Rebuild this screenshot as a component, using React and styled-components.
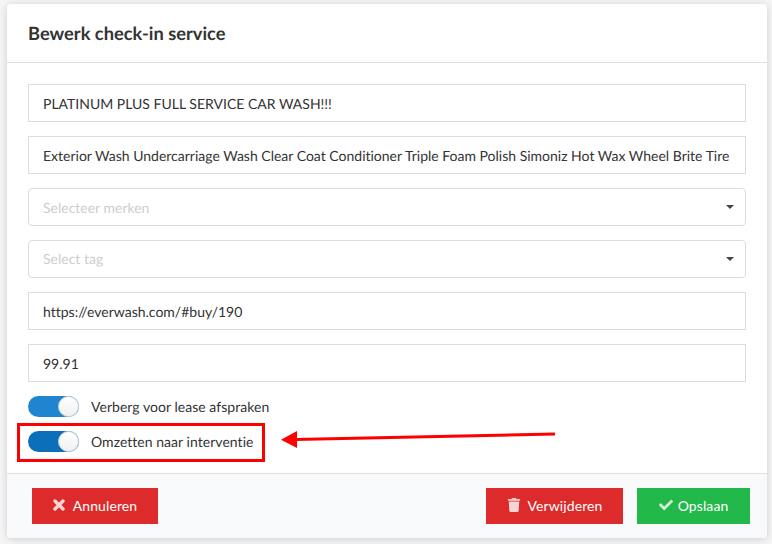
import React from "react";
import styled, { createGlobalStyle } from "styled-components";
import { FaTrash, FaCheck } from "react-icons/fa";

const Global = createGlobalStyle`
  html, body { margin: 0; padding: 0; background: #f6f6f6; }
  body {
    font-family: Lato, "Open Sans", sans-serif;
    font-variant-ligatures: none;
    text-rendering: geometricPrecision;
    width: 772px;
    height: 544px;
    overflow: hidden;
  }
`;

const Page = styled.div`
  position: relative;
  width: 772px;
  height: 544px;
  padding: 4px 5px 6px 7px;
  box-sizing: border-box;
`;

const Modal = styled.div`
  display: flex;
  flex-direction: column;
  height: 534px;
  background: #fff;
  border-radius: 4px;
  box-shadow: 0 1px 9px rgba(0, 0, 0, 0.17);
  overflow: hidden;
`;

const Header = styled.header`
  height: 59px;
  box-sizing: border-box;
  border-bottom: 1px solid #e0e0e0;
  padding: 0 21px;
  display: flex;
  align-items: center;
`;

const Title = styled.h2`
  margin: 0;
  font-size: 18.3px;
  font-weight: 700;
  color: #333;
`;

const Body = styled.div`
  flex: 1;
  padding: 21px 21px 0;
  display: flex;
  flex-direction: column;
  gap: 14px;
`;

const Field = styled.div`
  height: 38px;
  box-sizing: border-box;
  border: 1px solid #dcdcdc;
  border-radius: ${(p) => (p.$select ? "4px" : "0")};
  padding: 0 14px ${(p) => (p.$raised ? "2px" : "0")};
  display: flex;
  align-items: center;
  justify-content: space-between;
  font-size: 14px;
  color: ${(p) => (p.$placeholder ? "#cdcdcd" : "#333")};
  white-space: nowrap;
`;

const Caret = styled.span`
  width: 0;
  height: 0;
  border-left: 4px solid transparent;
  border-right: 4px solid transparent;
  border-top: 4px solid #444;
  margin-right: -3px;
  position: relative;
  top: ${(p) => (p.$raised ? "1px" : "0")};
`;

const Toggles = styled.div`
  display: flex;
  flex-direction: column;
  gap: 14px;
`;

const ToggleRow = styled.div`
  display: flex;
  align-items: center;
  gap: 12px;
  height: 21px;
  font-size: 14px;
  letter-spacing: 0.04px;
  color: #333;
`;

const Switch = styled.span`
  position: relative;
  width: 51px;
  height: 21px;
  border-radius: 11px;
  background: ${(p) => p.$color};
`;

const Knob = styled.span`
  position: absolute;
  right: 0;
  top: 0;
  width: 21px;
  height: 21px;
  box-sizing: border-box;
  border-radius: 50%;
  background: linear-gradient(#fff, #f0f0f0);
  border: 1px solid #d8d8d8;
`;

const Footer = styled.footer`
  height: 65px;
  box-sizing: border-box;
  border-top: 1px solid #dfdfe2;
  background: #f8f9fb;
  padding: 14px 17px 14px 25px;
  display: flex;
  align-items: flex-start;
  gap: 14px;
`;

const Button = styled.button`
  height: 36px;
  width: ${(p) => p.$width}px;
  margin-left: ${(p) => (p.$push ? "auto" : "0")};
  border: 0;
  padding: 0 0 2px;
  background: ${(p) => p.$bg};
  color: #fff;
  font-family: inherit;
  font-size: 14px;
  letter-spacing: 0.1px;
  display: flex;
  align-items: center;
  justify-content: center;
  gap: ${(p) => p.$gap}px;

  svg {
    flex: none;
    opacity: 0.8;
  }
`;

const RedBox = styled.div`
  position: absolute;
  left: 17px;
  top: 423px;
  width: 248px;
  height: 39px;
  box-sizing: border-box;
  border: 3px solid #f00;
  pointer-events: none;
`;

const Arrow = styled.svg`
  position: absolute;
  left: 275px;
  top: 425px;
  pointer-events: none;
`;

export default function App() {
  return (
    <Page>
      <Global />
      <Modal>
        <Header>
          <Title>Bewerk check-in service</Title>
        </Header>
        <Body>
          <Field>PLATINUM PLUS FULL SERVICE CAR WASH!!!</Field>
          <Field>Exterior Wash Undercarriage Wash Clear Coat Conditioner Triple Foam Polish Simoniz Hot Wax Wheel Brite Tire</Field>
          <Field $select $placeholder>Selecteer merken<Caret /></Field>
          <Field $select $placeholder $raised>Select tag<Caret $raised /></Field>
          <Field>https://everwash.com/#buy/190</Field>
          <Field>99.91</Field>
          <Toggles>
            <ToggleRow><Switch $color="#2085d0"><Knob /></Switch>Verberg voor lease afspraken</ToggleRow>
            <ToggleRow><Switch $color="#0c6fba"><Knob /></Switch>Omzetten naar interventie</ToggleRow>
          </Toggles>
        </Body>
        <Footer>
          <Button $bg="#dd2a2a" $width={126} $gap={8}>
            <svg width="12" height="12" viewBox="0 0 12 12">
              <path d="M2 2 10 10M10 2 2 10" stroke="#fff" strokeWidth="3.4" strokeLinecap="round" fill="none" />
            </svg>
            Annuleren
          </Button>
          <Button $bg="#dd2a2a" $width={137} $push $gap={7}>
            <FaTrash size={14} />
            Verwijderen
          </Button>
          <Button $bg="#22b94a" $width={113} $gap={5}>
            <FaCheck size={14} />
            Opslaan
          </Button>
        </Footer>
      </Modal>
      <RedBox />
      <Arrow width="285" height="26" viewBox="0 0 285 26">
        <path d="M280 9 20 14.5" stroke="#f00" strokeWidth="3" fill="none" />
        <path d="M6 14.8 22 6 22 23z" fill="#f00" />
      </Arrow>
    </Page>
  );
}
